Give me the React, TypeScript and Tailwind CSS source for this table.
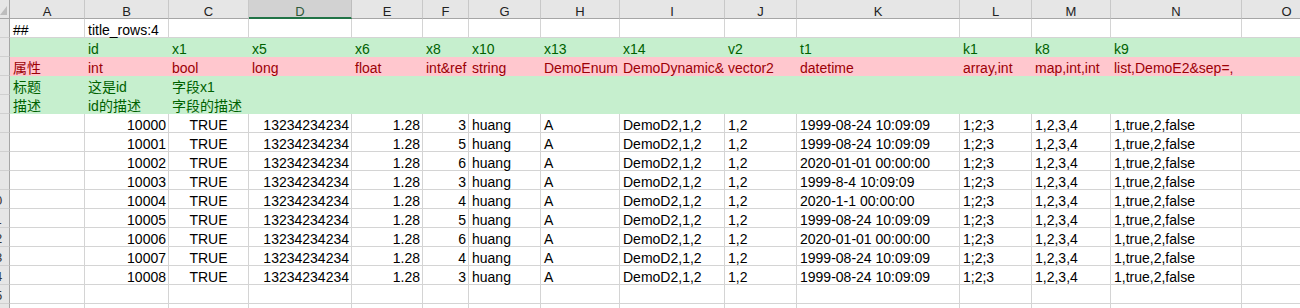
import React from "react";

type Align = "left" | "right" | "center";

type Col = {
  letter: string;
  width: number;
  align: Align;
};

type RowKind = "plain" | "good" | "bad";

type Row = {
  kind: RowKind;
  cells: string[];
};

const columns: Col[] = [
  { letter: "A", width: 75, align: "left" },
  { letter: "B", width: 84, align: "right" },
  { letter: "C", width: 80, align: "center" },
  { letter: "D", width: 103, align: "right" },
  { letter: "E", width: 71, align: "right" },
  { letter: "F", width: 46, align: "right" },
  { letter: "G", width: 72, align: "left" },
  { letter: "H", width: 79, align: "left" },
  { letter: "I", width: 105, align: "left" },
  { letter: "J", width: 72, align: "left" },
  { letter: "K", width: 163, align: "left" },
  { letter: "L", width: 72, align: "left" },
  { letter: "M", width: 79, align: "left" },
  { letter: "N", width: 131, align: "left" },
  { letter: "O", width: 90, align: "left" },
];

const records: [string, string, string][] = [
  ["10000", "3", "1999-08-24 10:09:09"],
  ["10001", "5", "1999-08-24 10:09:09"],
  ["10002", "6", "2020-01-01 00:00:00"],
  ["10003", "3", "1999-8-4 10:09:09"],
  ["10004", "4", "2020-1-1 00:00:00"],
  ["10005", "5", "1999-08-24 10:09:09"],
  ["10006", "6", "2020-01-01 00:00:00"],
  ["10007", "4", "1999-08-24 10:09:09"],
  ["10008", "3", "1999-08-24 10:09:09"],
];

const rows: Row[] = [
  { kind: "plain", cells: ["##", "title_rows:4"] },
  {
    kind: "good",
    cells: ["", "id", "x1", "x5", "x6", "x8", "x10", "x13", "x14", "v2", "t1", "k1", "k8", "k9"],
  },
  {
    kind: "bad",
    cells: [
      "属性",
      "int",
      "bool",
      "long",
      "float",
      "int&ref",
      "string",
      "DemoEnum",
      "DemoDynamic&sep=#",
      "vector2",
      "datetime",
      "array,int",
      "map,int,int",
      "list,DemoE2&sep=,",
    ],
  },
  { kind: "good", cells: ["标题", "这是id", "字段x1"] },
  { kind: "good", cells: ["描述", "id的描述", "字段的描述"] },
  ...records.map(([id, x8, t1]) => ({
    kind: "plain" as RowKind,
    cells: [
      "",
      id,
      "TRUE",
      "13234234234",
      "1.28",
      x8,
      "huang",
      "A",
      "DemoD2,1,2",
      "1,2",
      t1,
      "1;2;3",
      "1,2,3,4",
      "1,true,2,false",
    ],
  })),
  { kind: "plain", cells: [] },
  { kind: "plain", cells: [] },
];

const rowStyle: Record<RowKind, string> = {
  plain: "bg-white border-[#d4d4d4] text-black",
  good: "bg-[#c6efce] border-[#c6efce] text-[#006100]",
  bad: "bg-[#ffc7ce] border-[#ffc7ce] text-[#9c0006]",
};

const alignClass: Record<Align, string> = {
  left: "text-left pl-[3px]",
  right: "text-right pr-[2px]",
  center: "text-center",
};

function Corner() {
  return (
    <div className="w-[10px] h-[19px] shrink-0 bg-[#e6e6e6] border-r border-b border-[#a6a6a6] relative">
      <svg width="9" height="18" className="absolute left-0 top-0">
        <polygon points="0,15 7,15 7,6" fill="#bdbdbd" />
      </svg>
    </div>
  );
}

function ColumnHeader() {
  return (
    <div className="flex h-[19px]">
      <Corner />
      {columns.map((c) => {
        const selected = c.letter === "D";
        return (
          <div
            key={c.letter}
            style={{ width: c.width }}
            className={
              selected
                ? "shrink-0 h-[19px] bg-[#d2d2d2] border-r border-r-[#bdbdbd] border-b-2 border-b-[#217346] text-center text-[13px] leading-[13px] pt-[5px] text-[#2f5a3a]"
                : "shrink-0 h-[19px] bg-[#e6e6e6] border-r border-r-[#c8c8c8] border-b border-b-[#a6a6a6] text-center text-[13px] leading-[13px] pt-[5px] text-[#222]"
            }
          >
            {c.letter}
          </div>
        );
      })}
    </div>
  );
}

function RowNumber({ n }: { n: number }) {
  // row numbers are centred in a wider gutter that is scrolled mostly out of view
  return (
    <div className="w-[10px] h-[19px] shrink-0 bg-[#e6e6e6] border-r border-r-[#a6a6a6] border-b border-b-[#d0d0d0] overflow-hidden">
      <div className="w-[30px] ml-[-20px] text-center text-[13px] leading-[13px] pt-[4px] text-[#333]">
        {n}
      </div>
    </div>
  );
}

function SheetRow({ row, n }: { row: Row; n: number }) {
  return (
    <div className="flex h-[19px]">
      <RowNumber n={n} />
      {columns.map((c, i) => {
        const text = row.cells[i] ?? "";
        const align = row.kind === "plain" && n > 5 ? c.align : "left";
        return (
          <div
            key={c.letter}
            style={{ width: c.width }}
            className={`shrink-0 h-[19px] border-r border-b overflow-x-clip whitespace-nowrap text-[14px] leading-[14px] pt-[4px] ${rowStyle[row.kind]} ${alignClass[align]}`}
          >
            {text}
          </div>
        );
      })}
    </div>
  );
}

export default function App() {
  return (
    <div
      className="w-[1300px] h-[308px] overflow-hidden bg-white"
      style={{ fontFamily: '"Liberation Sans", "Noto Sans CJK SC", sans-serif' }}
    >
      <ColumnHeader />
      {rows.map((r, i) => (
        <SheetRow key={i} row={r} n={i + 1} />
      ))}
    </div>
  );
}
